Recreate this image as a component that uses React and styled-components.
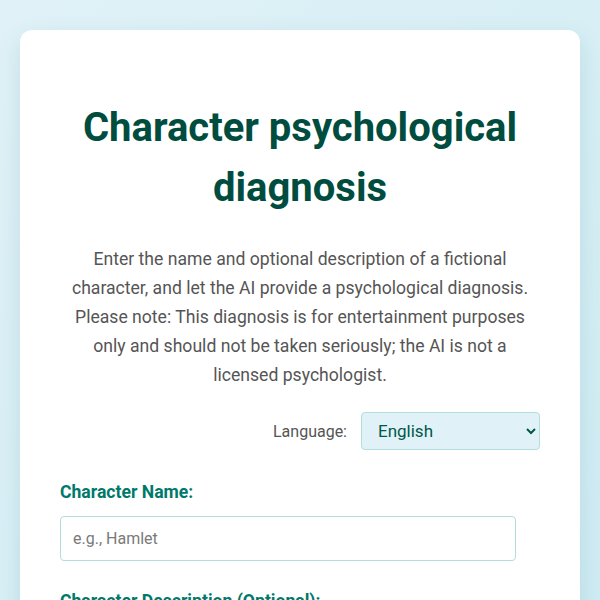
import React from "react";
import styled, { createGlobalStyle } from "styled-components";

const Global = createGlobalStyle`
  html, body { margin: 0; padding: 0; }
  body {
    font-family: Roboto, "Noto Sans", sans-serif;
    background: linear-gradient(135deg, #e0f2f7 0%, #cdebf3 100%);
    min-height: 100vh;
  }
  * { box-sizing: border-box; }
`;

const Page = styled.div`
  padding: 30px 20px;
  min-height: 100vh;
`;

const Card = styled.div`
  background: #ffffff;
  border-radius: 12px;
  box-shadow: 0 8px 24px rgba(0, 90, 110, 0.12);
  padding: 40px;
  min-height: 700px;
`;

const Title = styled.h1`
  font-size: 40px;
  line-height: 60px;
  font-weight: 700;
  color: #004d40;
  text-align: center;
  margin: 28px 0 27px;
`;

const Intro = styled.p`
  font-size: 17.6px;
  line-height: 29px;
  color: #555555;
  text-align: center;
  margin: 0 0 22px;
`;

const LangRow = styled.div`
  display: flex;
  justify-content: flex-end;
  align-items: center;
  gap: 14px;
  margin-bottom: 30px;
`;

const LangLabel = styled.label`
  font-size: 16px;
  color: #555555;
`;

const Select = styled.select`
  width: 179px;
  height: 38px;
  padding: 0 10px 0 12px;
  font-family: Roboto, sans-serif;
  font-size: 17px;
  color: #00574b;
  background: #e0f2f7;
  border: 1px solid #b2dfdb;
  border-radius: 4px;
`;

const Field = styled.div`
  display: flex;
  flex-direction: column;
  margin-bottom: 28px;
`;

const FieldLabel = styled.label`
  font-size: 17.6px;
  font-weight: 700;
  color: #00796b;
  margin-bottom: 12px;
  line-height: 24px;
`;

const Input = styled.input`
  width: 95%;
  height: 45px;
  padding: 0 12px;
  font-family: Roboto, sans-serif;
  font-size: 16px;
  color: #333;
  border: 1px solid #b2dfdb;
  border-radius: 4px;
  background: #fff;
  &::placeholder { color: #7a7a7a; }
`;

export default function App() {
  return (
    <>
      <Global />
      <Page>
        <Card>
          <Title>Character psychological diagnosis</Title>
          <Intro>
            Enter the name and optional description of a fictional character, and let the AI
            provide a psychological diagnosis. Please note: This diagnosis is for entertainment
            purposes only and should not be taken seriously; the AI is not a licensed
            psychologist.
          </Intro>
          <LangRow>
            <LangLabel htmlFor="lang">Language:</LangLabel>
            <Select id="lang" defaultValue="en">
              <option value="en">English</option>
            </Select>
          </LangRow>
          <Field>
            <FieldLabel htmlFor="name">Character Name:</FieldLabel>
            <Input id="name" placeholder="e.g., Hamlet" />
          </Field>
          <Field>
            <FieldLabel htmlFor="desc">Character Description (Optional):</FieldLabel>
          </Field>
        </Card>
      </Page>
    </>
  );
}
